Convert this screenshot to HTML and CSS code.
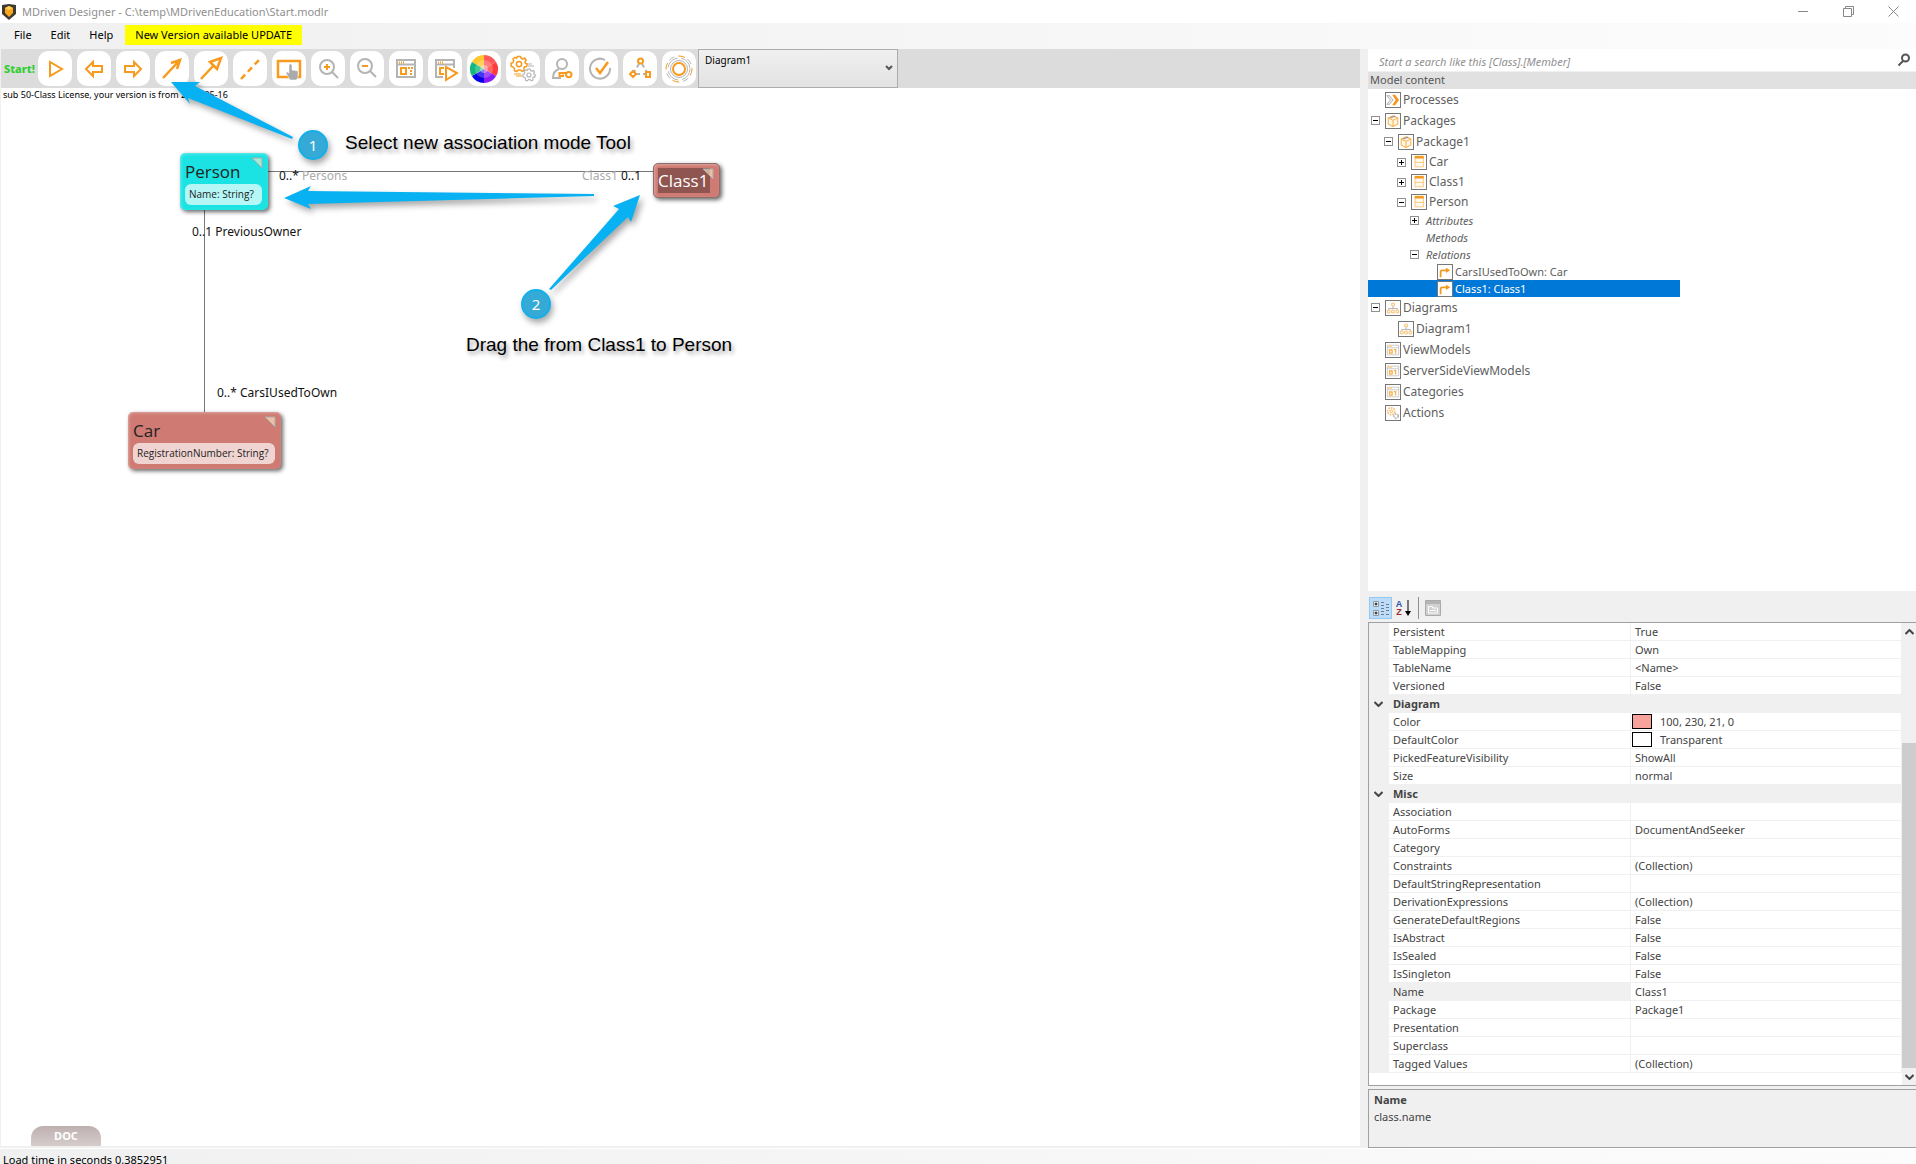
FILE: index.html
```html
<!DOCTYPE html>
<html lang="en">
<head>
<meta charset="utf-8">
<title>MDriven Designer</title>
<link rel="stylesheet" href="styles.css">
</head>
<body>
<svg class="defs" aria-hidden="true">
  <symbol id="i-package" viewBox="0 0 16 16"><path d="M8 2 13.500 4.500V11.500L8 14.500 2.500 11.500V4.500ZM2.500 4.500 8 7 13.500 4.500M8 7V14.500" fill="#fff6e4" stroke="#f9b24f" stroke-width="1.200"/><path d="M5 4.500 10.500 2.500" stroke="#999" stroke-width="1.500"/></symbol>
  <symbol id="i-class" viewBox="0 0 16 16"><path d="M3.500 3V13.500H13V3M3 8.500H13" fill="#fffaf0" stroke="#fbc26d"/><path d="M3 2.500H13.500" stroke="#f39a1e" stroke-width="3"/></symbol>
  <symbol id="i-relation" viewBox="0 0 16 16"><path d="M3 14V8Q3 6 5 6H11" fill="none" stroke="#f39a1e" stroke-width="2"/><path d="M9 3 14 6 9 9Z" fill="#f39a1e"/></symbol>
  <symbol id="i-diagram" viewBox="0 0 16 16"><path d="M8 6V9M3 10V8.500H13V10" fill="none" stroke="#aaa"/><path d="M6.500 2.500H9.500V5.500H6.500ZM1.500 10.500H4.500V13.500H1.500ZM6.500 10.500H9.500V13.500H6.500ZM11.500 10.500H14.500V13.500H11.500Z" fill="none" stroke="#f8b95f"/></symbol>
  <symbol id="i-view" viewBox="0 0 16 16"><path d="M1.500 2.500H14.500V13.500H1.500ZM1.500 5.500H14.500" fill="none" stroke="#c4c4c4"/><path d="M2 3.500H7" stroke="#fbd49b" stroke-width="2"/><path d="M4 8H7V11.500H4ZM9 7.500H11V12" fill="none" stroke="#f8b04a" stroke-width="1.500"/></symbol>
  <symbol id="i-actions" viewBox="0 0 16 16"><circle cx="6" cy="6" r="4" fill="none" stroke="#fbc47b" stroke-width="2" stroke-dasharray="2 1"/><circle cx="6" cy="6" r="1.500" fill="none" stroke="#f8b04a"/><circle cx="11.500" cy="11.500" r="2.500" fill="none" stroke="#bbb" stroke-width="2" stroke-dasharray="2 1"/></symbol>
  <symbol id="i-process" viewBox="0 0 16 16"><path d="M1 3 5 8 1 13H4L8 8 4 3Z" fill="#eee" stroke="#aaa"/><path d="M7 2H10.500L15 8 10.500 14H7L11 8Z" fill="#f39a1e"/></symbol>
  <symbol id="i-gear" viewBox="-12 -12 24 24"><path d="M-2-10H2L3-7.500 5-6.500 7.500-8 9.500-5 8-3 8.500-1 11 0 10 3.500 7.500 3.500 6.500 5.500 7 8.500 4 10 2 8H-1L-3 10-6 9-6 6-8 4-10.500 3-10.500-1-8-2-7-4-8-7-5.500-9-3.500-7.500Z" fill="none" stroke="currentColor" stroke-width="2" stroke-linejoin="round"/><circle r="3.500" fill="none" stroke="currentColor" stroke-width="2"/></symbol>
</svg>

<header class="titlebar">
  <svg class="app-icon" viewBox="0 0 14 16" aria-hidden="true"><path d="M0 1 7 0 14 1V10L7 16 0 10Z" fill="#3d3a36"/><path d="M3 4 7 2 11 4V9L7 13 3 9Z" fill="#f9a61a"/><path d="M3 4 7 6 11 4 7 2Z" fill="#ffd04f"/></svg>
  <h1 class="title">MDriven Designer - C:\temp\MDrivenEducation\Start.modlr</h1>
  <div class="window-buttons">
    <button type="button" aria-label="Minimize"><svg viewBox="0 0 11 11"><path d="M0 5.500H10"/></svg></button>
    <button type="button" aria-label="Restore"><svg viewBox="0 0 11 11"><path d="M.5 2.500H8.500V10.500H.5ZM2.500 2.500V.5H10.500V8.500H8.500"/></svg></button>
    <button type="button" aria-label="Close"><svg viewBox="0 0 11 11"><path d="M.5.5 10.500 10.500M10.500.5.5 10.500"/></svg></button>
  </div>
</header>

<nav class="menubar" aria-label="Main menu">
  <button type="button">File</button>
  <button type="button">Edit</button>
  <button type="button">Help</button>
  <button type="button" class="update">New Version available UPDATE</button>
</nav>

<main class="workspace">
  <section class="designer" aria-label="Designer">
    <div class="toolbar">
      <button type="button" class="start">Start!</button>
      <button type="button" class="tool" aria-label="Run"><svg viewBox="0 0 34 35"><path class="o" d="M12 11V25L24 18Z"/></svg></button>
      <button type="button" class="tool" aria-label="Back"><svg viewBox="0 0 34 35"><path class="o" d="M9 18 16 11V15H25V21H16V25Z"/></svg></button>
      <button type="button" class="tool" aria-label="Forward"><svg viewBox="0 0 34 35"><path class="o" d="M25 18 18 11V15H9V21H18V25Z"/></svg></button>
      <button type="button" class="tool" aria-label="New association"><svg viewBox="0 0 34 35"><path class="o mid" d="M8 27 24 10M16 12 25 9 22 18"/></svg></button>
      <button type="button" class="tool" aria-label="New generalization"><svg viewBox="0 0 34 35"><path class="o mid" d="M7 28 20 14M16 11 27 7 23 18Z"/></svg></button>
      <button type="button" class="tool" aria-label="New dependency"><svg viewBox="0 0 34 35"><path class="o mid" stroke-dasharray="6 4" d="M8 28 26 9"/></svg></button>
      <button type="button" class="tool" aria-label="Select area"><svg viewBox="0 0 34 35"><path class="o mid" d="M6 10H28V26H6Z"/><path d="M17 14Q18.500 12 20 14V19L26 20V27L24 29H18L14 22Q15 20 17 22Z" fill="#aaa" stroke="#fff" stroke-width=".5"/></svg></button>
      <button type="button" class="tool" aria-label="Zoom in"><svg viewBox="0 0 34 35"><circle class="g" cx="16" cy="16" r="7"/><path class="g" d="M21 21 27 27"/><path class="o" d="M16 13V19M13 16H19"/></svg></button>
      <button type="button" class="tool" aria-label="Zoom out"><svg viewBox="0 0 34 35"><circle class="g" cx="15" cy="15" r="7"/><path class="g" d="M20 20 26 26"/><path class="o" d="M12 15H18"/></svg></button>
      <button type="button" class="tool" aria-label="View models"><svg viewBox="0 0 34 35"><path class="g" d="M8 9H26V26H8ZM8 13.500H26"/><path class="o" stroke-dasharray="1 1" d="M10 11.500H16"/><path class="o" d="M12 17H17V23H12Z"/><path class="o" stroke-dasharray="2 1" d="M19 17H24M22 19V25"/></svg></button>
      <button type="button" class="tool" aria-label="Run prototype"><svg viewBox="0 0 34 35"><path class="g" d="M15 26H8V9H26V17M8 13.500H26"/><path class="o" stroke-dasharray="1 1" d="M10 11.500H16"/><path class="o" d="M16 17H12V23H16"/><path class="o" fill="#fff" d="M18 16V29L29 22Z"/></svg></button>
      <button type="button" class="tool" aria-label="Colors"><svg viewBox="0 0 34 35"><g transform="translate(17 18)"><path fill="#ffc62e" d="M0 0V-14A14 14 0 0 0-12.100-7Z"/><path fill="#ff5a5a" d="M0 0V-14A14 14 0 0 1 12.100-7Z"/><path fill="#ff3b3b" d="M0 0 12.100-7A14 14 0 0 1 12.100 7Z"/><path fill="#8a1cf7" d="M0 0 12.100 7A14 14 0 0 1 0 14Z"/><path fill="#0a00ea" d="M0 0V14A14 14 0 0 1-12.100 7Z"/><path fill="#12b87c" d="M0 0-12.100 7A14 14 0 0 1-12.100-7Z"/><circle r="9" fill="#fff" opacity=".22"/><circle r="4" fill="#fff" opacity=".35"/></g></svg></button>
      <button type="button" class="tool" aria-label="Settings"><svg viewBox="0 0 34 35"><use class="orange" href="#i-gear" x="4" y="4" width="18" height="18"/><use class="gray" href="#i-gear" x="16" y="17" width="14" height="14"/><path class="o thin" d="M8 23H15M10 25H16"/><path class="g thin" d="M22 13H26M22 15H28"/></svg></button>
      <button type="button" class="tool" aria-label="Access groups"><svg viewBox="0 0 34 35"><circle class="g" cx="17" cy="13" r="5"/><path class="g" d="M14 18Q8 20 8 27H16"/><path class="o" d="M21 22H14.500V25H18V23.500M21 23.500C21 20 26.500 20 26.500 23.500S21 27 21 23.500"/></svg></button>
      <button type="button" class="tool" aria-label="Validate"><svg viewBox="0 0 34 35"><path class="g" d="M21 9A10 10 0 1 0 26 17"/><path class="o mid" d="M12 17 16 22 24 11"/></svg></button>
      <button type="button" class="tool" aria-label="State machine"><svg viewBox="0 0 34 35"><path class="g" stroke-dasharray="4 3" d="M16 13 11 21M19 13 24 21M13 23H22"/><circle class="o" cx="17.500" cy="10" r="2.500"/><path class="o" d="M10 20 13 23 10 26 7 23ZM23 21H27V26H23Z"/></svg></button>
      <button type="button" class="tool" aria-label="Turnkey"><svg viewBox="0 0 34 35"><circle class="o" cx="17" cy="18" r="6"/><circle class="g thin" cx="17" cy="18" r="8.500"/><circle class="g thin" cx="17" cy="18" r="11" stroke-dasharray="14 4"/><circle class="o thin" cx="17" cy="18" r="13" stroke-dasharray="7 13"/><circle class="g thin" cx="17" cy="18" r="13" stroke-dasharray="6 14" stroke-dashoffset="10"/></svg></button>
      <div class="combo">
        <select aria-label="Diagram"><option>Diagram1</option></select>
        <svg viewBox="0 0 8 6" aria-hidden="true"><path d="M1 1 4 4 7 1"/></svg>
      </div>
    </div>

    <div class="canvas">
      <p class="license">sub 50-Class License, your version is from 2017-05-16</p>

      <svg class="links" aria-hidden="true"><path d="M268 83.500H653M204.500 122V325"/></svg>

      <article class="node person">
        <h2>Person</h2>
        <p>Name: String?</p>
        <svg class="fold" viewBox="0 0 12 12" aria-hidden="true"><path d="M1 1H11V11Z"/></svg>
      </article>
      <article class="node class1">
        <h2>Class1</h2>
        <svg class="fold" viewBox="0 0 12 12" aria-hidden="true"><path d="M1 1H11V11Z"/></svg>
      </article>
      <article class="node car">
        <h2>Car</h2>
        <p>RegistrationNumber: String?</p>
        <svg class="fold" viewBox="0 0 12 12" aria-hidden="true"><path d="M1 1H11V11Z"/></svg>
      </article>

      <span class="role persons">0..* <i>Persons</i></span>
      <span class="role class1-end"><i>Class1</i> 0..1</span>
      <span class="role previous-owner">0..1 PreviousOwner</span>
      <span class="role cars-used">0..* CarsIUsedToOwn</span>

      <svg class="arrows" aria-hidden="true">
        <path d="M171-6 200-6 195-2 293 49 292 51 188 10 190 16Z"/>
        <path d="M284 110 311 98 308 103 594 106V108L308 116 311 121Z"/>
        <path d="M640 107 613 118 619 121 549 201 551 202 628 129 631 134Z"/>
      </svg>
      <span class="step one">1</span>
      <span class="step two">2</span>
      <p class="note note-one">Select new association mode Tool</p>
      <p class="note note-two">Drag the from Class1 to Person</p>

      <button type="button" class="doc">DOC</button>
    </div>
  </section>

  <aside class="side">
    <div class="search">
      <input type="text" aria-label="Search the model" placeholder="Start a search like this [Class].[Member]">
      <button type="button" aria-label="Search"><svg viewBox="0 0 14 14"><circle cx="8.500" cy="5" r="3.500"/><path d="M6 8 1.500 12.500"/></svg></button>
    </div>
    <h2 class="side-title">Model content</h2>
    <ul class="tree" aria-label="Model content">
      <li class="leaf"><svg class="ico"><use href="#i-process"/></svg>Processes</li>
      <li><button type="button" class="exp" aria-label="Collapse"></button><svg class="ico"><use href="#i-package"/></svg>Packages</li>
      <li class="l1"><button type="button" class="exp" aria-label="Collapse"></button><svg class="ico"><use href="#i-package"/></svg>Package1</li>
      <li class="l2"><button type="button" class="exp plus" aria-label="Expand"></button><svg class="ico"><use href="#i-class"/></svg>Car</li>
      <li class="l2"><button type="button" class="exp plus" aria-label="Expand"></button><svg class="ico"><use href="#i-class"/></svg>Class1</li>
      <li class="l2"><button type="button" class="exp" aria-label="Collapse"></button><svg class="ico"><use href="#i-class"/></svg>Person</li>
      <li class="l3 small"><button type="button" class="exp plus" aria-label="Expand"></button><em>Attributes</em></li>
      <li class="l3 small leaf"><em>Methods</em></li>
      <li class="l3 small"><button type="button" class="exp" aria-label="Collapse"></button><em>Relations</em></li>
      <li class="l4 small leaf"><svg class="ico"><use href="#i-relation"/></svg>CarsIUsedToOwn: Car</li>
      <li class="l4 small leaf selected"><svg class="ico"><use href="#i-relation"/></svg>Class1: Class1</li>
      <li><button type="button" class="exp" aria-label="Collapse"></button><svg class="ico"><use href="#i-diagram"/></svg>Diagrams</li>
      <li class="l1 leaf"><svg class="ico"><use href="#i-diagram"/></svg>Diagram1</li>
      <li class="leaf"><svg class="ico"><use href="#i-view"/></svg>ViewModels</li>
      <li class="leaf"><svg class="ico"><use href="#i-view"/></svg>ServerSideViewModels</li>
      <li class="leaf"><svg class="ico"><use href="#i-view"/></svg>Categories</li>
      <li class="leaf"><svg class="ico"><use href="#i-actions"/></svg>Actions</li>
    </ul>

    <div class="prop-tools">
      <button type="button" class="on" aria-label="Categorized"><svg viewBox="0 0 16 16"><path d="M.5 1.500H5.500V6.500H.5ZM.5 10.500H5.500V15.500H.5Z" fill="#fff" stroke="#89a"/><path d="M1.500 4H4.500M3 2.500V5.500M1.500 13H4.500M3 11.500V14.500" stroke="#000"/><path d="M8 2.500H11M8 5.500H11M8 8.500H11M8 11.500H11M8 14.500H11M13 4.500H16M13 7.500H16M13 10.500H16M13 14.500H16" stroke="#667f99"/></svg></button>
      <button type="button" aria-label="Alphabetical" class="az"><span class="letters"><b>A</b><b>Z</b></span><svg viewBox="0 0 6 16"><path d="M3 0V13" stroke="#000" fill="none"/><path d="M0 11H6L3 16Z"/></svg></button>
      <span class="sep"></span>
      <button type="button" aria-label="Property pages" disabled><svg viewBox="0 0 16 16"><path d="M.5.5H15.500V15.500H.5Z" fill="#d0d0d0" stroke="#aaa"/><path d="M1 2.500H15" stroke="#b4b4b4" stroke-width="3"/><path d="M3.500 6.500H7.500V8H12.500V13H3.500ZM5 10.500H11" fill="none" stroke="#fff"/></svg></button>
    </div>

    <div class="grid">
      <table class="props">
        <colgroup><col class="gutter"><col class="name"><col></colgroup>
        <tbody>
          <tr><td></td><th scope="row">Persistent</th><td>True</td></tr>
          <tr><td></td><th scope="row">TableMapping</th><td>Own</td></tr>
          <tr><td></td><th scope="row">TableName</th><td>&lt;Name&gt;</td></tr>
          <tr><td></td><th scope="row">Versioned</th><td>False</td></tr>
          <tr class="cat"><td><button type="button" aria-label="Collapse Diagram"><svg viewBox="0 0 9 6"><path d="M.5 1 4.500 5 8.500 1"/></svg></button></td><th colspan="2" scope="rowgroup">Diagram</th></tr>
          <tr><td></td><th scope="row">Color</th><td><span class="swatch pink"></span>100, 230, 21, 0</td></tr>
          <tr><td></td><th scope="row">DefaultColor</th><td><span class="swatch"></span>Transparent</td></tr>
          <tr><td></td><th scope="row">PickedFeatureVisibility</th><td>ShowAll</td></tr>
          <tr><td></td><th scope="row">Size</th><td>normal</td></tr>
          <tr class="cat"><td><button type="button" aria-label="Collapse Misc"><svg viewBox="0 0 9 6"><path d="M.5 1 4.500 5 8.500 1"/></svg></button></td><th colspan="2" scope="rowgroup">Misc</th></tr>
          <tr><td></td><th scope="row">Association</th><td></td></tr>
          <tr><td></td><th scope="row">AutoForms</th><td>DocumentAndSeeker</td></tr>
          <tr><td></td><th scope="row">Category</th><td></td></tr>
          <tr><td></td><th scope="row">Constraints</th><td>(Collection)</td></tr>
          <tr><td></td><th scope="row">DefaultStringRepresentation</th><td></td></tr>
          <tr><td></td><th scope="row">DerivationExpressions</th><td>(Collection)</td></tr>
          <tr><td></td><th scope="row">GenerateDefaultRegions</th><td>False</td></tr>
          <tr><td></td><th scope="row">IsAbstract</th><td>False</td></tr>
          <tr><td></td><th scope="row">IsSealed</th><td>False</td></tr>
          <tr><td></td><th scope="row">IsSingleton</th><td>False</td></tr>
          <tr class="current"><td></td><th scope="row">Name</th><td>Class1</td></tr>
          <tr><td></td><th scope="row">Package</th><td>Package1</td></tr>
          <tr><td></td><th scope="row">Presentation</th><td></td></tr>
          <tr><td></td><th scope="row">Superclass</th><td></td></tr>
          <tr><td></td><th scope="row">Tagged Values</th><td>(Collection)</td></tr>
        </tbody>
      </table>
      <div class="scrollbar">
        <button type="button" aria-label="Scroll up"><svg viewBox="0 0 9 6"><path d="M.5 5 4.500 1 8.500 5"/></svg></button>
        <div class="track"><div class="thumb"></div></div>
        <button type="button" aria-label="Scroll down"><svg viewBox="0 0 9 6"><path d="M.5 1 4.500 5 8.500 1"/></svg></button>
      </div>
    </div>

    <div class="help"><strong>Name</strong><p>class.name</p></div>
  </aside>
</main>

<footer class="status">Load time in seconds 0.3852951</footer>
</body>
</html>
```
FILE: styles.css
```css
* { box-sizing: border-box; }

body {
  margin: 0;
  height: 100vh;
  display: flex;
  flex-direction: column;
  overflow: hidden;
  background: #f0f0f0;
  color: #000;
  font: 11px/18px "Noto Sans", "Open Sans", sans-serif;
}

h1, h2, p, ul { margin: 0; padding: 0; font-size: inherit; font-weight: normal; }
button { margin: 0; padding: 0; border: 0; background: none; color: inherit; font: inherit; }
svg { display: block; }
.defs { position: absolute; width: 0; height: 0; }

/* Title bar */
.titlebar { display: flex; align-items: center; height: 23px; flex: none; background: #fff; padding-left: 2px; color: #8f8f8f; }
.app-icon { width: 14px; height: 16px; margin-right: 6px; }
.window-buttons { display: flex; margin-left: auto; }
.window-buttons button { width: 45px; height: 20px; display: grid; place-items: center; }
.window-buttons svg { width: 11px; height: 11px; fill: none; stroke: #888; }

/* Menu */
.menubar { display: flex; align-items: center; height: 26px; flex: none; gap: 1px; padding: 0 0 2px 5px; background: linear-gradient(90deg, #f0f0f0 0%, #fcfcfc 100%); }
.menubar button { height: 20px; padding: 0 9px; }
.menubar .update { background: #ff0; margin-left: 2px; padding: 0 10px; }

.workspace { flex: 1; min-height: 0; display: grid; grid-template-columns: minmax(0, 1fr) 548px; gap: 8px; }

/* Designer */
.designer { display: flex; flex-direction: column; min-width: 0; border-bottom: 2px solid #f0f0f0; }
.toolbar { display: flex; gap: 5px; flex: none; height: 39px; padding: 2px 0 2px 3px; margin-left: 1px; background: #dcdcdc; }
.start { width: 29px; color: #2fcf2f; font-weight: 800; white-space: nowrap; text-align: left; }
.tool { width: 34px; height: 35px; flex: none; border-radius: 10px; background: #fff; }
.tool svg { width: 34px; height: 35px; }
.o { fill: none; stroke: #f79a1d; stroke-width: 2; }
.g { fill: none; stroke: #b4b4b4; stroke-width: 2; }
.mid { stroke-width: 2.5; }
.thin { stroke-width: 1; }
.o[fill] { fill: #fff; }
.orange { color: #f79a1d; }
.gray { color: #b4b4b4; }

.combo { position: relative; width: 200px; height: 39px; margin: -2px 0 0 -3px; }
.combo select {
  appearance: none;
  width: 100%;
  height: 100%;
  padding: 0 6px 18px;
  border: 1px solid #acacac;
  border-radius: 0;
  background: linear-gradient(#f0f0f0, #e2e2e2);
  font: 10px/18px "Noto Sans", sans-serif;
}
.combo svg { position: absolute; right: 5px; top: 16px; width: 8px; height: 6px; fill: none; stroke: #555; stroke-width: 2; pointer-events: none; }

.canvas { position: relative; flex: 1; min-height: 0; background: #fff; box-shadow: inset 1px 0 #f0f0f0; }
.license { padding-left: 3px; font-size: 9px; line-height: 14px; }
.links, .arrows { position: absolute; left: 0; top: 0; width: 100%; height: 100%; overflow: visible; pointer-events: none; }
.links path { stroke: #777; fill: none; }
.arrows { filter: drop-shadow(3px 4px 3px rgba(0, 0, 0, .35)); }
.arrows path { fill: #08b2f2; }

.node { position: absolute; padding: 6px 6px 5px 5px; border-radius: 5px; box-shadow: 2px 2px 4px rgba(0, 0, 0, .6), inset 1px 1px 3px rgba(255, 255, 255, .35); background: #cf7a72; color: #222; font-family: "Open Sans", sans-serif; }
.node h2 { font-size: 17px; line-height: 25px; white-space: nowrap; }
.node p { font-size: 10px; line-height: 21px; padding-left: 4px; border-radius: 6px; background: rgba(255, 255, 255, .68); white-space: nowrap; }
.fold { position: absolute; top: 4px; right: 5px; width: 12px; height: 12px; }
.fold path { fill: rgba(255, 238, 200, .6); stroke: #aaa; }
.person { left: 180px; top: 65px; width: 88px; height: 57px; background: #1be3e3; }
.class1 { left: 653px; top: 75px; width: 67px; height: 35px; padding: 4px; border: 1px solid #8a6f6c; }
.class1 h2 { width: 52px; color: #fff; background: #8f5550; }
.car { left: 128px; top: 324px; width: 153px; height: 57px; }

.role { position: absolute; font-size: 12px; line-height: 16px; white-space: nowrap; color: #111; }
.role i { font-style: normal; color: #aaa; }
.persons { left: 279px; top: 80px; }
.class1-end { left: 582px; top: 80px; }
.previous-owner { left: 192px; top: 136px; }
.cars-used { left: 217px; top: 297px; }

.step { position: absolute; width: 30px; height: 30px; border: 2px solid #12b0ea; border-radius: 50%; background: #35aad6; color: #fff; font-size: 15px; line-height: 26px; text-align: center; box-shadow: 2px 4px 6px rgba(0, 0, 0, .35); }
.one { left: 298px; top: 42px; }
.two { left: 521px; top: 201px; }
.note { position: absolute; font: 19px/24px "Liberation Sans", Arial, sans-serif; white-space: nowrap; text-shadow: 2px 3px 4px rgba(0, 0, 0, .4); }
.note-one { left: 345px; top: 43px; }
.note-two { left: 466px; top: 245px; }

.doc { position: absolute; left: 31px; bottom: 0; width: 70px; height: 20px; border-radius: 12px 12px 0 0; background: linear-gradient(#bfb0b0, #d6cccc); color: #fff; font-weight: bold; }

/* Side panel */
.side { display: flex; flex-direction: column; min-width: 0; color: #444; }
.search { display: flex; align-items: center; flex: none; height: 22px; margin-bottom: 1px; background: #fff; }
.search input { flex: 1; min-width: 0; height: 22px; border: 0; padding: 2px 11px 0; background: none; outline: 0; font: italic 11px/18px "Noto Sans", sans-serif; }
.search input::placeholder { color: #909090; opacity: 1; }
.search button { width: 20px; display: grid; place-items: center; margin-right: 2px; }
.search svg { width: 14px; height: 14px; fill: none; stroke: #555; stroke-width: 2; }
.side-title { flex: none; height: 17px; line-height: 15px; padding-left: 2px; background: #e1e1e1; color: #555; }

.tree { flex: 1; min-height: 0; overflow: hidden; list-style: none; background: #fff; color: #606060; font-size: 12px; }
.tree li { display: flex; align-items: center; height: 21px; padding-left: 3px; gap: 2px; }
.tree .leaf { padding-left: 17px; }
.tree .l1 { padding-left: 16px; }
.tree .l1.leaf { padding-left: 30px; }
.tree .l2 { padding-left: 29px; height: 20px; }
.tree .l3 { padding-left: 42px; gap: 7px; }
.tree .l3.leaf { padding-left: 58px; }
.tree .l4.leaf { padding-left: 69px; }
.tree .small { height: 17px; font-size: 11px; line-height: 17px; }
.tree .selected { width: 57%; background: #0078d7; color: #fff; }
.ico { width: 16px; height: 16px; flex: none; border: 1px solid #777; background: #fff; }
.exp { width: 9px; height: 9px; flex: none; border: 1px solid #919191; background: linear-gradient(#000, #000) center / 5px 1px no-repeat, #fff; }
.exp.plus { background: linear-gradient(#000, #000) center / 5px 1px no-repeat, linear-gradient(#000, #000) center / 1px 5px no-repeat, #fff; }
.exp + .ico { margin-left: 3px; }

.prop-tools { display: flex; align-items: center; flex: none; height: 31px; padding: 3px 0 0 1px; }
.prop-tools button { width: 23px; height: 22px; display: grid; place-items: center; }
.prop-tools svg { width: 16px; height: 16px; }
.prop-tools .on { background: #bedcf5; border: 1px solid #90c8f6; }
.prop-tools .az { display: flex; align-items: center; justify-content: center; gap: 3px; }
.prop-tools .az svg { width: 6px; }
.letters b { display: block; font: bold 9px/8px "Liberation Sans", sans-serif; color: #2c52a8; }
.letters b + b { color: #9b2c2c; }
.sep { width: 1px; height: 22px; margin: 0 2px 0 3px; background: #909090; }

.grid { display: flex; flex: none; border: 1px solid #a0a0a0; border-right: 0; background: #fff; }
.props { flex: 1; table-layout: fixed; border-collapse: separate; border-spacing: 0; margin-bottom: 12px; }
.gutter { width: 20px; }
.name { width: 242px; }
.props td, .props th { height: 18px; padding: 0 4px; border: solid #f0f0f0; border-width: 0 1px 1px 0; font-weight: normal; text-align: left; line-height: 17px; white-space: nowrap; }
.props td:first-child, .props .cat th, .props .current th { background: #f0f0f0; }
.props .cat th { font-weight: bold; }
.props button { width: 10px; height: 10px; display: grid; place-items: center; }
.props svg, .scrollbar svg { width: 9px; height: 6px; fill: none; stroke: #444; stroke-width: 2; }
.swatch { display: inline-block; width: 20px; height: 15px; margin: 1px 8px 0 -3px; border: 1px solid #000; vertical-align: top; background: #fff; }
.pink { background: #f7a39b; }

.scrollbar { display: flex; flex-direction: column; width: 14px; background: #f0f0f0; }
.scrollbar button { height: 17px; display: grid; place-items: center; }
.track { flex: 1; display: flex; flex-direction: column; justify-content: flex-end; }
.thumb { height: 76%; background: #cdcdcd; }

.help { flex: none; height: 59px; margin-top: 3px; padding: 1px 5px; border: 1px solid #a0a0a0; border-right: 0; line-height: 17px; }

.status { flex: none; height: 16px; padding: 2px 0 0 3px; line-height: 18px; border-top: 1px solid #fff; background: linear-gradient(90deg, #f0f0f0, #fcfcfc); white-space: nowrap; }
```
